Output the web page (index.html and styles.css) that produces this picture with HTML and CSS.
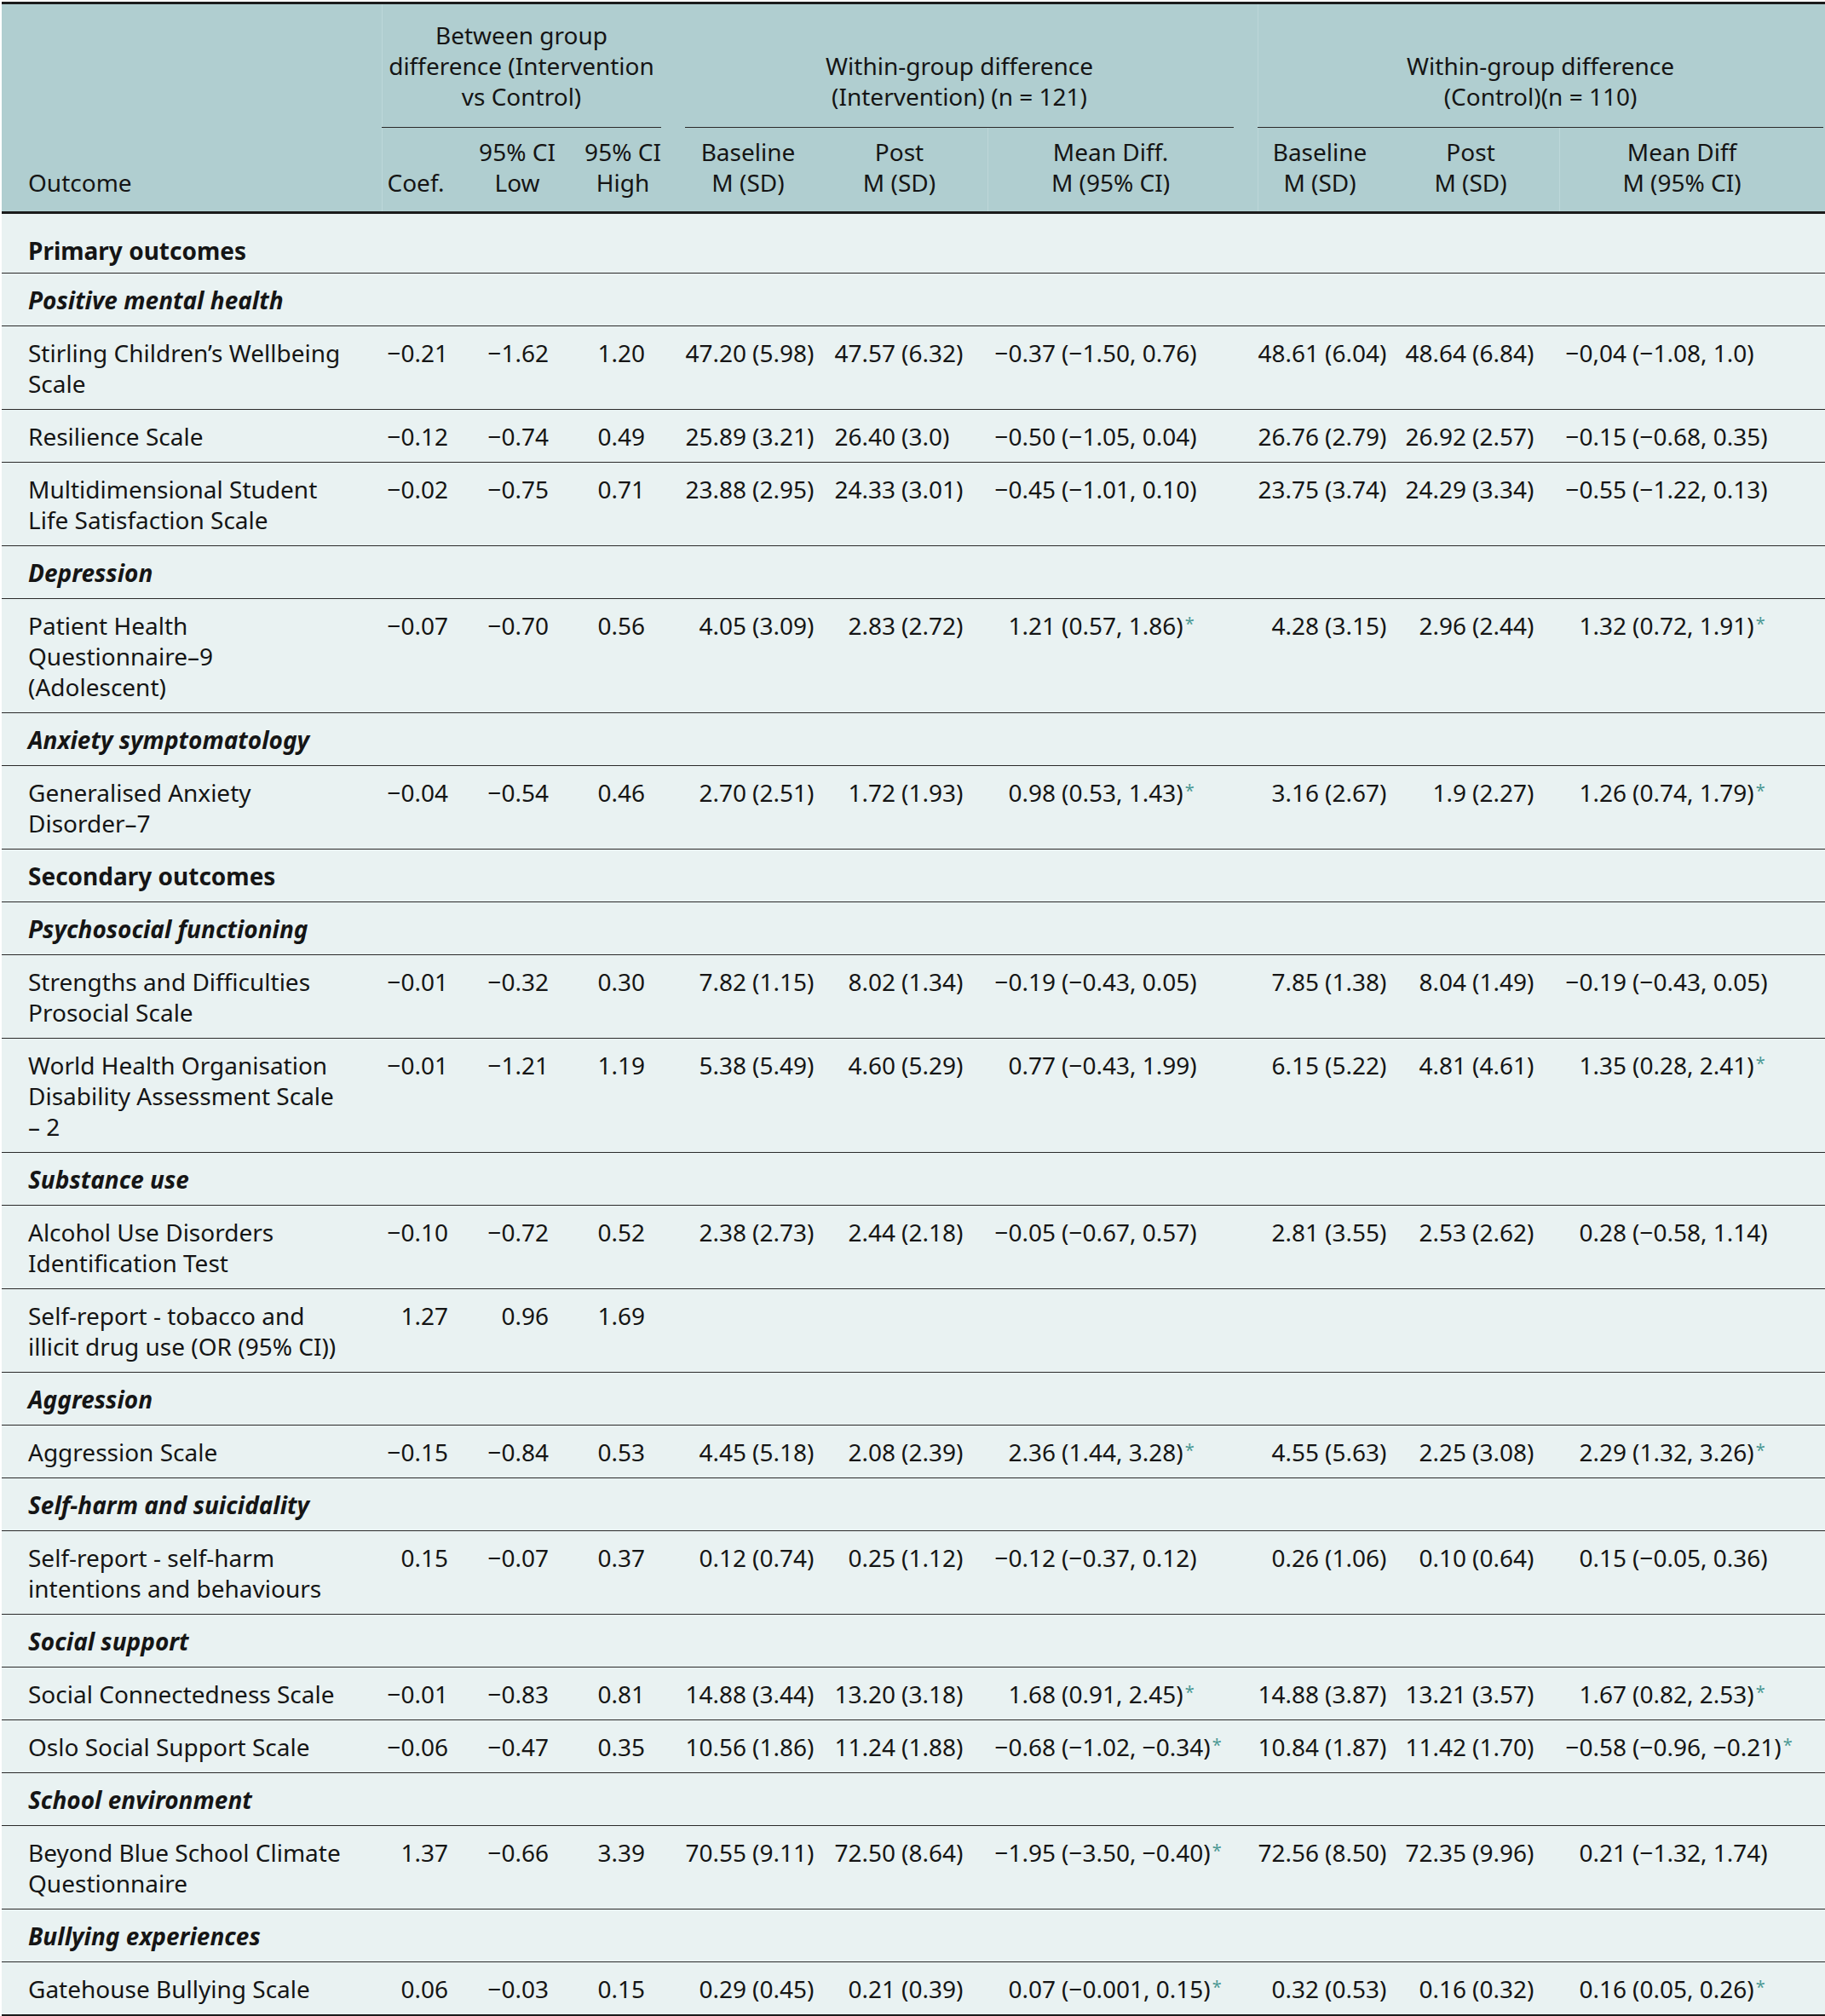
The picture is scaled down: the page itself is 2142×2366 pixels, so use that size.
FILE: index.html
```html
<!DOCTYPE html>
<html>
<head>
    <title>Outcomes table</title>
    <link rel="stylesheet" href="styles.css">
</head>
<body>
    <table class="results">
        <colgroup>
            <col class="w-name">
            <col class="w-coef">
            <col class="w-low">
            <col class="w-high">
            <col class="w-ib">
            <col class="w-ip">
            <col class="w-im">
            <col class="w-cb">
            <col class="w-cp">
            <col class="w-cm">
        </colgroup>
        <thead>
            <tr class="group-row">
                <th rowspan="2" class="outcome-head">Outcome</th>
                <th colspan="3" class="group sep"><div class="group-label">Between group<br>difference (Intervention<br>vs Control)</div></th>
                <th colspan="3" class="group"><div class="group-label">Within-group difference<br>(Intervention) (n = 121)</div></th>
                <th colspan="3" class="group sep last"><div class="group-label">Within-group difference<br>(Control)(n = 110)</div></th>
            </tr>
            <tr class="sub-row">
                <th class="sep">Coef.</th>
                <th>95% CI<br>Low</th>
                <th class="gap">95% CI<br>High</th>
                <th>Baseline<br>M (SD)</th>
                <th>Post<br>M (SD)</th>
                <th class="gap sep">Mean Diff.<br>M (95% CI)</th>
                <th class="sep">Baseline<br>M (SD)</th>
                <th>Post<br>M (SD)</th>
                <th class="gap-last sep">Mean Diff<br>M (95% CI)</th>
            </tr>
        </thead>
        <tbody>
            <tr class="section major first"><td colspan="10">Primary outcomes</td></tr>
            <tr class="section minor"><td colspan="10">Positive mental health</td></tr>
            <tr>
                <td class="name">Stirling Children’s Wellbeing<br>Scale</td>
                <td class="coef">−0.21</td><td class="low">−1.62</td><td class="high">1.20</td>
                <td class="ib"><span class="n">47.20</span>(5.98)</td>
                <td class="ip"><span class="n">47.57</span>(6.32)</td>
                <td class="im"><span class="n">−0.37</span>(−1.50, 0.76)</td>
                <td class="cb"><span class="n">48.61</span>(6.04)</td>
                <td class="cp"><span class="n">48.64</span>(6.84)</td>
                <td class="cm"><span class="n">−0,04</span>(−1.08, 1.0)</td>
            </tr>
            <tr>
                <td class="name">Resilience Scale</td>
                <td class="coef">−0.12</td><td class="low">−0.74</td><td class="high">0.49</td>
                <td class="ib"><span class="n">25.89</span>(3.21)</td>
                <td class="ip"><span class="n">26.40</span>(3.0)</td>
                <td class="im"><span class="n">−0.50</span>(−1.05, 0.04)</td>
                <td class="cb"><span class="n">26.76</span>(2.79)</td>
                <td class="cp"><span class="n">26.92</span>(2.57)</td>
                <td class="cm"><span class="n">−0.15</span>(−0.68, 0.35)</td>
            </tr>
            <tr>
                <td class="name">Multidimensional Student<br>Life Satisfaction Scale</td>
                <td class="coef">−0.02</td><td class="low">−0.75</td><td class="high">0.71</td>
                <td class="ib"><span class="n">23.88</span>(2.95)</td>
                <td class="ip"><span class="n">24.33</span>(3.01)</td>
                <td class="im"><span class="n">−0.45</span>(−1.01, 0.10)</td>
                <td class="cb"><span class="n">23.75</span>(3.74)</td>
                <td class="cp"><span class="n">24.29</span>(3.34)</td>
                <td class="cm"><span class="n">−0.55</span>(−1.22, 0.13)</td>
            </tr>
            <tr class="section minor"><td colspan="10">Depression</td></tr>
            <tr>
                <td class="name">Patient Health<br>Questionnaire–9<br>(Adolescent)</td>
                <td class="coef">−0.07</td><td class="low">−0.70</td><td class="high">0.56</td>
                <td class="ib"><span class="n">4.05</span>(3.09)</td>
                <td class="ip"><span class="n">2.83</span>(2.72)</td>
                <td class="im"><span class="n">1.21</span>(0.57, 1.86)<sup class="sig">*</sup></td>
                <td class="cb"><span class="n">4.28</span>(3.15)</td>
                <td class="cp"><span class="n">2.96</span>(2.44)</td>
                <td class="cm"><span class="n">1.32</span>(0.72, 1.91)<sup class="sig">*</sup></td>
            </tr>
            <tr class="section minor"><td colspan="10">Anxiety symptomatology</td></tr>
            <tr>
                <td class="name">Generalised Anxiety<br>Disorder–7</td>
                <td class="coef">−0.04</td><td class="low">−0.54</td><td class="high">0.46</td>
                <td class="ib"><span class="n">2.70</span>(2.51)</td>
                <td class="ip"><span class="n">1.72</span>(1.93)</td>
                <td class="im"><span class="n">0.98</span>(0.53, 1.43)<sup class="sig">*</sup></td>
                <td class="cb"><span class="n">3.16</span>(2.67)</td>
                <td class="cp"><span class="n">1.9</span>(2.27)</td>
                <td class="cm"><span class="n">1.26</span>(0.74, 1.79)<sup class="sig">*</sup></td>
            </tr>
            <tr class="section major"><td colspan="10">Secondary outcomes</td></tr>
            <tr class="section minor"><td colspan="10">Psychosocial functioning</td></tr>
            <tr>
                <td class="name">Strengths and Difficulties<br>Prosocial Scale</td>
                <td class="coef">−0.01</td><td class="low">−0.32</td><td class="high">0.30</td>
                <td class="ib"><span class="n">7.82</span>(1.15)</td>
                <td class="ip"><span class="n">8.02</span>(1.34)</td>
                <td class="im"><span class="n">−0.19</span>(−0.43, 0.05)</td>
                <td class="cb"><span class="n">7.85</span>(1.38)</td>
                <td class="cp"><span class="n">8.04</span>(1.49)</td>
                <td class="cm"><span class="n">−0.19</span>(−0.43, 0.05)</td>
            </tr>
            <tr>
                <td class="name">World Health Organisation<br>Disability Assessment Scale<br>– 2</td>
                <td class="coef">−0.01</td><td class="low">−1.21</td><td class="high">1.19</td>
                <td class="ib"><span class="n">5.38</span>(5.49)</td>
                <td class="ip"><span class="n">4.60</span>(5.29)</td>
                <td class="im"><span class="n">0.77</span>(−0.43, 1.99)</td>
                <td class="cb"><span class="n">6.15</span>(5.22)</td>
                <td class="cp"><span class="n">4.81</span>(4.61)</td>
                <td class="cm"><span class="n">1.35</span>(0.28, 2.41)<sup class="sig">*</sup></td>
            </tr>
            <tr class="section minor"><td colspan="10">Substance use</td></tr>
            <tr>
                <td class="name">Alcohol Use Disorders<br>Identification Test</td>
                <td class="coef">−0.10</td><td class="low">−0.72</td><td class="high">0.52</td>
                <td class="ib"><span class="n">2.38</span>(2.73)</td>
                <td class="ip"><span class="n">2.44</span>(2.18)</td>
                <td class="im"><span class="n">−0.05</span>(−0.67, 0.57)</td>
                <td class="cb"><span class="n">2.81</span>(3.55)</td>
                <td class="cp"><span class="n">2.53</span>(2.62)</td>
                <td class="cm"><span class="n">0.28</span>(−0.58, 1.14)</td>
            </tr>
            <tr>
                <td class="name">Self-report - tobacco and<br>illicit drug use (OR (95% CI))</td>
                <td class="coef">1.27</td><td class="low">0.96</td><td class="high">1.69</td>
                <td class="ib"></td><td class="ip"></td><td class="im"></td>
                <td class="cb"></td><td class="cp"></td><td class="cm"></td>
            </tr>
            <tr class="section minor"><td colspan="10">Aggression</td></tr>
            <tr>
                <td class="name">Aggression Scale</td>
                <td class="coef">−0.15</td><td class="low">−0.84</td><td class="high">0.53</td>
                <td class="ib"><span class="n">4.45</span>(5.18)</td>
                <td class="ip"><span class="n">2.08</span>(2.39)</td>
                <td class="im"><span class="n">2.36</span>(1.44, 3.28)<sup class="sig">*</sup></td>
                <td class="cb"><span class="n">4.55</span>(5.63)</td>
                <td class="cp"><span class="n">2.25</span>(3.08)</td>
                <td class="cm"><span class="n">2.29</span>(1.32, 3.26)<sup class="sig">*</sup></td>
            </tr>
            <tr class="section minor"><td colspan="10">Self-harm and suicidality</td></tr>
            <tr>
                <td class="name">Self-report - self-harm<br>intentions and behaviours</td>
                <td class="coef">0.15</td><td class="low">−0.07</td><td class="high">0.37</td>
                <td class="ib"><span class="n">0.12</span>(0.74)</td>
                <td class="ip"><span class="n">0.25</span>(1.12)</td>
                <td class="im"><span class="n">−0.12</span>(−0.37, 0.12)</td>
                <td class="cb"><span class="n">0.26</span>(1.06)</td>
                <td class="cp"><span class="n">0.10</span>(0.64)</td>
                <td class="cm"><span class="n">0.15</span>(−0.05, 0.36)</td>
            </tr>
            <tr class="section minor"><td colspan="10">Social support</td></tr>
            <tr>
                <td class="name">Social Connectedness Scale</td>
                <td class="coef">−0.01</td><td class="low">−0.83</td><td class="high">0.81</td>
                <td class="ib"><span class="n">14.88</span>(3.44)</td>
                <td class="ip"><span class="n">13.20</span>(3.18)</td>
                <td class="im"><span class="n">1.68</span>(0.91, 2.45)<sup class="sig">*</sup></td>
                <td class="cb"><span class="n">14.88</span>(3.87)</td>
                <td class="cp"><span class="n">13.21</span>(3.57)</td>
                <td class="cm"><span class="n">1.67</span>(0.82, 2.53)<sup class="sig">*</sup></td>
            </tr>
            <tr>
                <td class="name">Oslo Social Support Scale</td>
                <td class="coef">−0.06</td><td class="low">−0.47</td><td class="high">0.35</td>
                <td class="ib"><span class="n">10.56</span>(1.86)</td>
                <td class="ip"><span class="n">11.24</span>(1.88)</td>
                <td class="im"><span class="n">−0.68</span>(−1.02, −0.34)<sup class="sig">*</sup></td>
                <td class="cb"><span class="n">10.84</span>(1.87)</td>
                <td class="cp"><span class="n">11.42</span>(1.70)</td>
                <td class="cm"><span class="n">−0.58</span>(−0.96, −0.21)<sup class="sig">*</sup></td>
            </tr>
            <tr class="section minor"><td colspan="10">School environment</td></tr>
            <tr>
                <td class="name">Beyond Blue School Climate<br>Questionnaire</td>
                <td class="coef">1.37</td><td class="low">−0.66</td><td class="high">3.39</td>
                <td class="ib"><span class="n">70.55</span>(9.11)</td>
                <td class="ip"><span class="n">72.50</span>(8.64)</td>
                <td class="im"><span class="n">−1.95</span>(−3.50, −0.40)<sup class="sig">*</sup></td>
                <td class="cb"><span class="n">72.56</span>(8.50)</td>
                <td class="cp"><span class="n">72.35</span>(9.96)</td>
                <td class="cm"><span class="n">0.21</span>(−1.32, 1.74)</td>
            </tr>
            <tr class="section minor"><td colspan="10">Bullying experiences</td></tr>
            <tr>
                <td class="name">Gatehouse Bullying Scale</td>
                <td class="coef">0.06</td><td class="low">−0.03</td><td class="high">0.15</td>
                <td class="ib"><span class="n">0.29</span>(0.45)</td>
                <td class="ip"><span class="n">0.21</span>(0.39)</td>
                <td class="im"><span class="n">0.07</span>(−0.001, 0.15)<sup class="sig">*</sup></td>
                <td class="cb"><span class="n">0.32</span>(0.53)</td>
                <td class="cp"><span class="n">0.16</span>(0.32)</td>
                <td class="cm"><span class="n">0.16</span>(0.05, 0.26)<sup class="sig">*</sup></td>
            </tr>
        </tbody>
    </table>
</body>
</html>
```

FILE: styles.css
```css
body {
    margin: 0;
    padding: 2px 0 0 2px;
    background: #fff;
    font-family: "Noto Sans", Lato, sans-serif;
    font-size: 28px;
    line-height: 36px;
    color: #151515;
}

.results {
    width: 2140px;
    table-layout: fixed;
    border-collapse: separate;
    border-spacing: 0;
    border-top: 3px solid #1b1b1b;
}

/* column widths */
.w-name { width: 446px; }
.w-coef { width: 80px; }
.w-low  { width: 158px; }
.w-high { width: 118px; }
.w-ib   { width: 148px; }
.w-ip   { width: 207px; }
.w-im   { width: 317px; }
.w-cb   { width: 146px; }
.w-cp   { width: 208px; }
.w-cm   { width: 312px; }

/* header */
.results th {
    background: #b0ced0;
    font-weight: normal;
    padding: 0;
    white-space: nowrap;
}
.results th.sep {
    box-shadow: inset 1px 0 0 #bdd7d9;
}

.outcome-head {
    text-align: left;
    vertical-align: bottom;
    padding: 0 0 16px 31px !important;
    border-bottom: 3px solid #1b1b1b;
}

.group-row th.group {
    vertical-align: bottom;
    padding-top: 18px;
}
.group-label {
    text-align: center;
    padding-bottom: 18px;
    border-bottom: 1px solid #2a2a2a;
    margin-right: 28px;
}
.group-row th.last .group-label {
    margin-right: 2px;
}

.sub-row th {
    text-align: center;
    vertical-align: bottom;
    padding: 10px 0 16px 0;
    border-bottom: 3px solid #1b1b1b;
}
.sub-row th.gap { padding-right: 28px; }
.sub-row th.gap-last { padding-right: 24px; }

/* body */
.results td {
    background: #e9f2f2;
    padding: 13px 0 12px 0;
    border-bottom: 1px solid #2a2a2a;
    vertical-align: top;
    white-space: nowrap;
}
.results tbody tr:last-child td {
    border-bottom: 3px solid #1b1b1b;
}

.section td {
    padding-left: 31px;
    font-weight: bold;
}
.section.minor td {
    font-style: italic;
}
.section.first td {
    padding-top: 25px;
    padding-bottom: 8px;
}

td.name { padding-left: 31px; }
td.coef { text-align: right; padding-right: 2px; }
td.low  { text-align: right; padding-right: 42px; }
td.high { text-align: right; padding-right: 47px; }

/* mean values line up on the opening bracket */
td.ib, td.cb { padding-left: 0; }
td.ip { padding-left: 27px; }
td.cp { padding-left: 27px; }
td.im { padding-left: 8px; }
td.cm { padding-left: 7px; }

.n {
    display: inline-block;
    width: 72px;
    margin-right: 7px;
    text-align: right;
}

.sig {
    color: #4a9894;
    font-size: 20px;
    line-height: 0;
    vertical-align: 6px;
    margin-left: 2px;
}
```
